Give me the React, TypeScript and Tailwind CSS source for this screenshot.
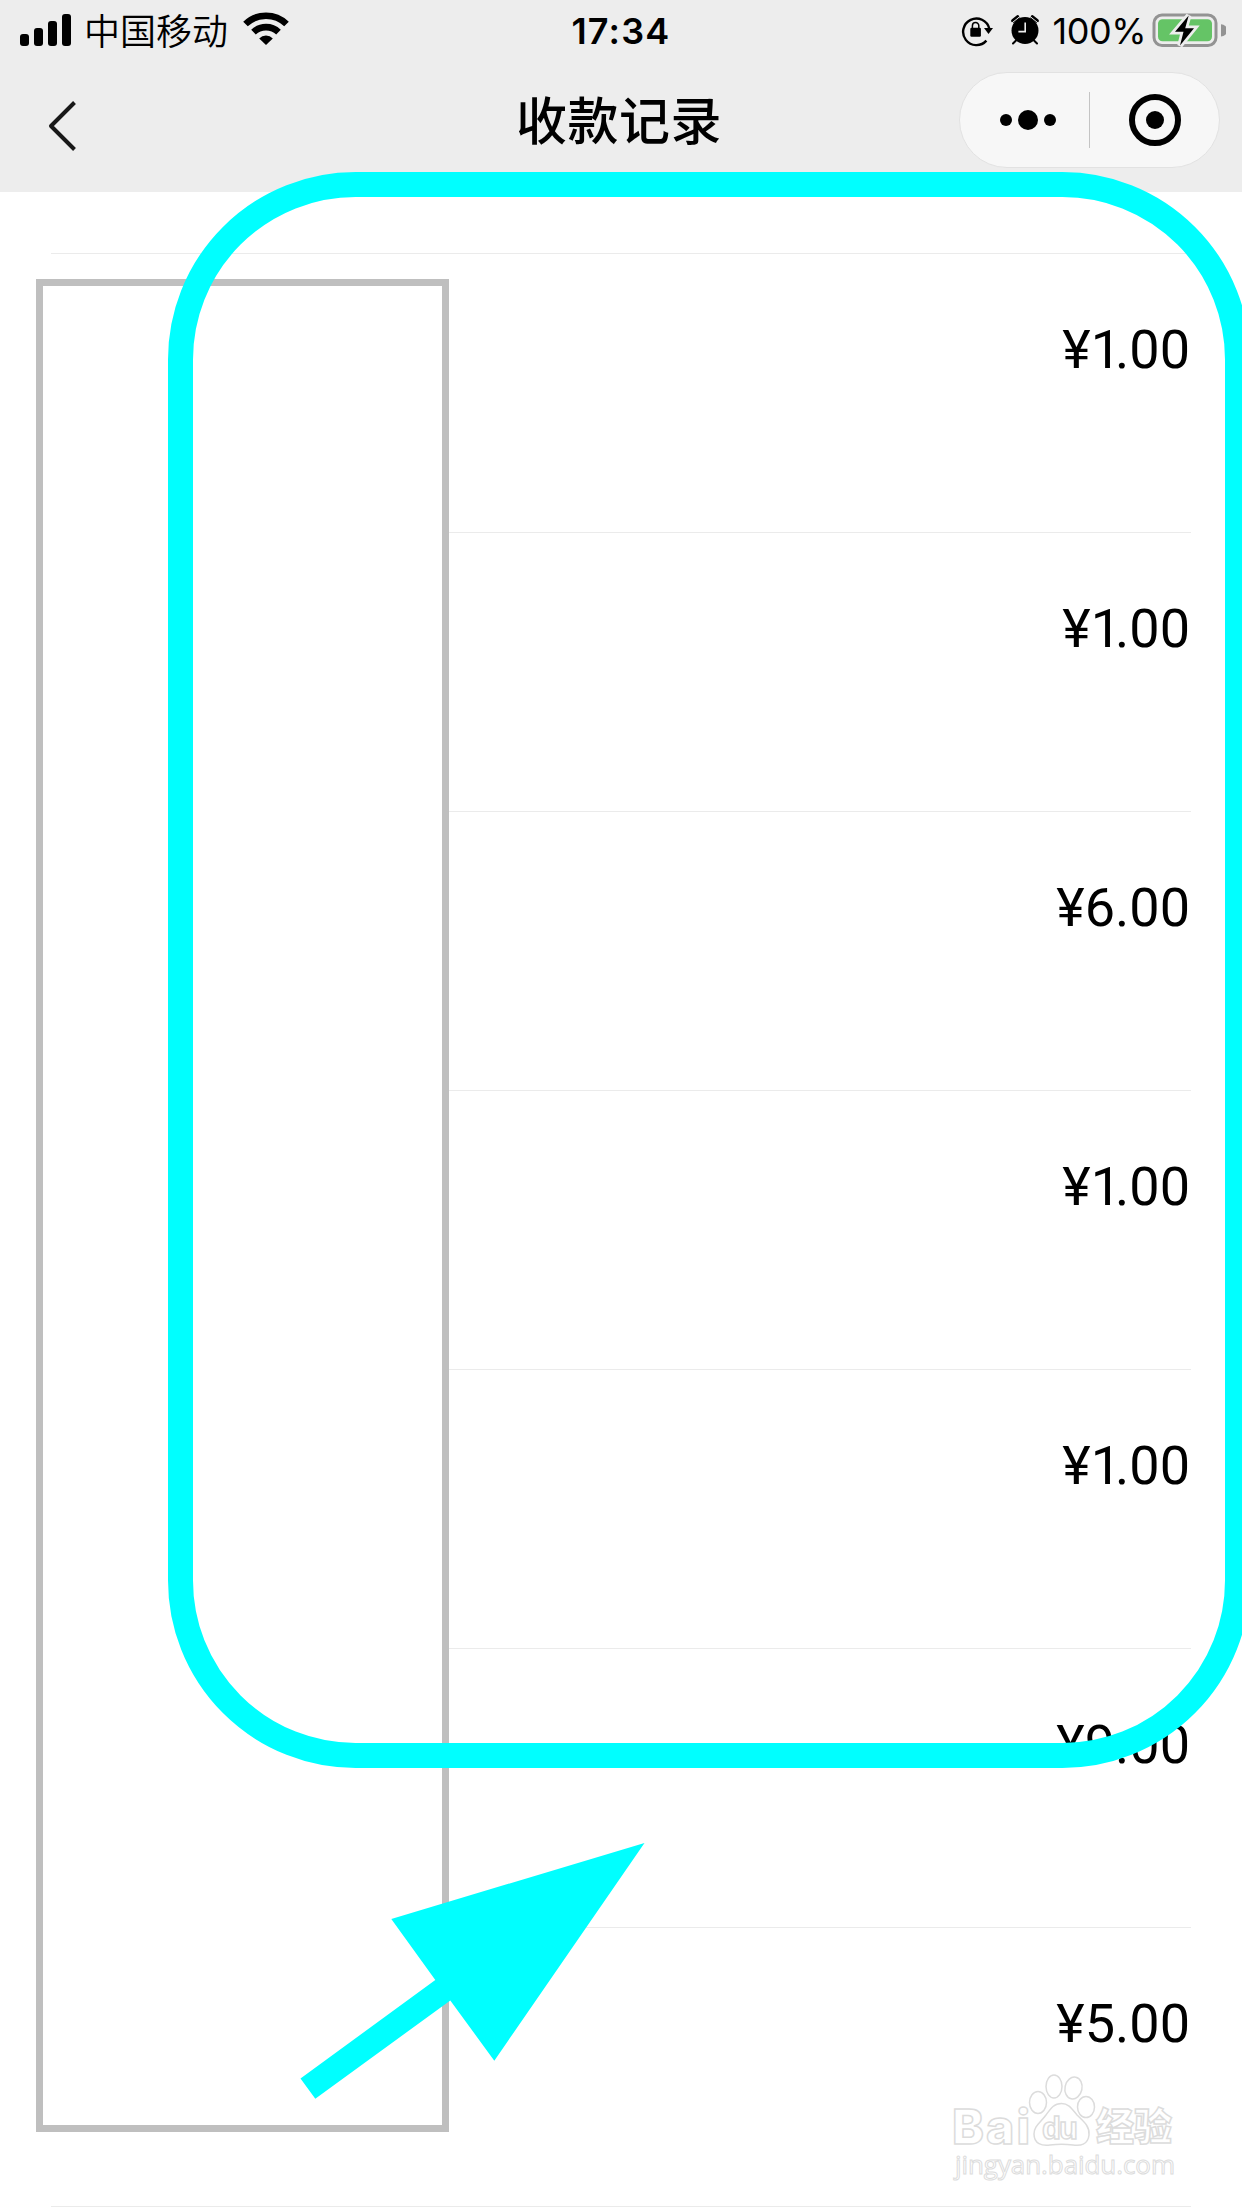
import React from "react";

///////////////////////////////////////////////////////////////////////////////
///////// Payment records — status bar, nav bar and list of amounts //////////
///////////////////////////////////////////////////////////////////////////////

type PaymentRecord = { id: number; whole: string; cents: string };

const records: PaymentRecord[] = [
  { id: 1, whole: "1", cents: ".00" },
  { id: 2, whole: "1", cents: ".00" },
  { id: 3, whole: "6", cents: ".00" },
  { id: 4, whole: "1", cents: ".00" },
  { id: 5, whole: "1", cents: ".00" },
  { id: 6, whole: "9", cents: ".00" },
  { id: 7, whole: "5", cents: ".00" },
];

function SignalIcon() {
  return (
    <svg width="52" height="33" viewBox="0 0 52 33" className="shrink-0">
      <rect x="0" y="20" width="9" height="12" rx="3" />
      <rect x="14" y="14" width="9" height="18" rx="3" />
      <rect x="28" y="7" width="9" height="25" rx="3" />
      <rect x="42" y="0" width="9" height="32" rx="3" />
    </svg>
  );
}

function WifiIcon() {
  return (
    <svg width="46" height="34" viewBox="0 0 46 34" className="shrink-0">
      <g fill="none" stroke="black">
        <path d="M2.5 12 A 29.5 29.5 0 0 1 43.5 12" strokeWidth="6.6" />
        <path d="M10.5 20.2 A 18 18 0 0 1 35.5 20.2" strokeWidth="6.6" />
      </g>
      <path d="M23 33 L16.2 26.4 A 9.6 9.6 0 0 1 29.8 26.4 Z" />
    </svg>
  );
}

function RotationLockIcon() {
  return (
    <svg width="34" height="32" viewBox="0 0 34 32" className="shrink-0">
      <path
        d="M25.4 25.6 A 13.3 13.3 0 1 1 28.3 13.5"
        fill="none"
        stroke="black"
        strokeWidth="2.4"
      />
      <path d="M23 13 L32 13 L27.5 19 Z" />
      <rect x="9.3" y="12.8" width="10.6" height="9" rx="1.2" />
      <path
        d="M11.4 13 V10.8 A 3.2 3.2 0 0 1 17.8 10.8 V13"
        fill="none"
        stroke="black"
        strokeWidth="1.5"
      />
    </svg>
  );
}

function AlarmIcon() {
  return (
    <svg width="28" height="30" viewBox="0 0 28 30" className="shrink-0">
      <circle cx="14" cy="15.5" r="13.5" />
      <path
        d="M2.2 5.8 L6.6 2.2 M25.8 5.8 L21.4 2.2"
        stroke="black"
        strokeWidth="4"
        strokeLinecap="round"
      />
      <path d="M0.8 8 L9 1.4 M27.2 8 L19 1.4" stroke="#ededed" strokeWidth="1" />
      <path
        d="M5 25.5 L2 28.5 M23 25.5 L26 28.5"
        stroke="black"
        strokeWidth="2"
        strokeLinecap="round"
      />
      <path d="M14.2 7.5 V16.6 H7.4" fill="none" stroke="#ededed" strokeWidth="1.6" />
    </svg>
  );
}

function BatteryIcon() {
  return (
    <svg width="74" height="36" viewBox="0 0 74 36" className="shrink-0">
      <rect
        x="2"
        y="2"
        width="62"
        height="30.5"
        rx="8"
        fill="none"
        stroke="#939393"
        strokeWidth="3"
      />
      <rect x="6" y="6.3" width="54" height="22" rx="4.5" fill="#65c466" />
      <path d="M69 11.2 A 6.2 6.2 0 0 1 69 23.6 Z" fill="#939393" />
      <path
        d="M36.7 2.5 L23 18.7 H31.5 L28 32.6 L42 15.2 H33.2 Z"
        stroke="#ededed"
        strokeWidth="5.5"
      />
      <path d="M36.7 2.5 L23 18.7 H31.5 L28 32.6 L42 15.2 H33.2 Z" />
    </svg>
  );
}

function StatusBar() {
  return (
    <div className="flex h-[60px] items-start">
      <div className="flex flex-1 items-start pl-5">
        <div className="mt-[14px]">
          <SignalIcon />
        </div>
        <span className="ml-3 mt-[2px] font-['Noto_Sans_CJK_SC',sans-serif] text-4xl leading-[54px] font-[350]">
          中国移动
        </span>
        <div className="ml-[15px] mt-[12px]">
          <WifiIcon />
        </div>
      </div>
      <span className="-ml-1 mt-[4px] font-['Inter',sans-serif] text-4xl leading-[54px] font-semibold tracking-[1.2px]">
        17:34
      </span>
      <div className="flex flex-1 items-start justify-end pr-4">
        <div className="mt-[15px]">
          <RotationLockIcon />
        </div>
        <div className="ml-[16px] mt-[15px]">
          <AlarmIcon />
        </div>
        <span className="ml-[14px] mt-[4px] font-['Inter',sans-serif] text-4xl leading-[54px] tracking-[-0.5px]">
          100%
        </span>
        <div className="ml-[6px] mt-[13px]">
          <BatteryIcon />
        </div>
      </div>
    </div>
  );
}

function NavBar() {
  return (
    <div className="flex h-[132px] items-start">
      <div className="flex-1">
        <svg width="30" height="52" viewBox="0 0 30 52" className="ml-12 mt-10">
          <path
            d="M26.5 2.5 L3 26 L26.5 49.5"
            fill="none"
            stroke="#181818"
            strokeWidth="4"
            strokeLinejoin="round"
          />
        </svg>
      </div>
      <h1 className="-ml-1 mt-5 font-['Noto_Sans_CJK_SC',sans-serif] text-[51px] leading-[76px] font-medium tracking-[0.5px]">
        收款记录
      </h1>
      <div className="flex flex-1 justify-end pt-3">
        <div className="mr-[22px] flex h-24 w-[261px] items-center rounded-full border border-[#e2e2e2] bg-[#f7f7f7]">
          <div className="flex w-[129px] items-center justify-center gap-1.5 pl-1.5">
            <span className="size-3 rounded-full bg-black" />
            <span className="size-5 rounded-full bg-black" />
            <span className="size-3 rounded-full bg-black" />
          </div>
          <span className="h-14 w-px bg-[#c4c4c4]" />
          <div className="flex flex-1 items-center justify-center">
            <span className="flex size-[52px] items-center justify-center rounded-full border-6 border-black">
              <span className="size-[18px] rounded-full bg-black" />
            </span>
          </div>
        </div>
      </div>
    </div>
  );
}

function RecordRow({ record }: { record: PaymentRecord }) {
  return (
    <li className="flex h-[279px] justify-end border-b border-[#ebebeb] pt-16 pr-px">
      <span className="font-['Roboto',sans-serif] text-[54px] leading-[64px]">
        ¥
        <span className={record.whole === "1" ? "tracking-[-6px]" : ""}>
          {record.whole}
        </span>
        {record.cents}
      </span>
    </li>
  );
}

function Watermark() {
  return (
    <svg
      width="240"
      height="120"
      viewBox="0 0 240 120"
      className="absolute left-[945px] top-[2070px]"
      fill="white"
      stroke="#dcdcdc"
      strokeWidth="1.5"
    >
      <text
        x="7"
        y="73.5"
        fontSize="48"
        fontWeight="800"
        textLength="78"
        fontFamily="Inter, sans-serif"
      >
        Bai
      </text>
      <ellipse cx="93" cy="32.5" rx="8.5" ry="11" />
      <ellipse cx="109" cy="16.5" rx="8" ry="11.5" />
      <ellipse cx="128.5" cy="18" rx="8.5" ry="11" transform="rotate(12 128.5 18)" />
      <ellipse cx="141" cy="37" rx="8.5" ry="10.5" />
      <path d="M116.5 33.5 C124 33.5 127 39 132 45 C138 51 145 56 144 65 C143 75 135 76 128 75 C120 74 113 74 105 75 C97 76 89 74 89 64 C89 56 95 53 101 45 C106 38 109 33.5 116.5 33.5 Z" />
      <text
        x="97"
        y="69"
        fontSize="31"
        fontWeight="700"
        textLength="36"
        fontFamily="Liberation Sans, sans-serif"
      >
        du
      </text>
      <text
        x="151"
        y="70"
        fontSize="38"
        fontWeight="900"
        fontFamily="Noto Sans CJK SC, sans-serif"
      >
        经验
      </text>
      <text
        x="10"
        y="104"
        fontSize="26"
        strokeWidth="1"
        textLength="220"
        fontFamily="Open Sans, sans-serif"
      >
        jingyan.baidu.com
      </text>
    </svg>
  );
}

export default function App() {
  return (
    <div className="relative h-[2208px] w-[1242px] overflow-hidden bg-white text-black">
      <header className="bg-[#ededed]">
        <StatusBar />
        <NavBar />
      </header>

      <main className="px-[51px]">
        <div className="h-[62px] border-b border-[#ebebeb]" />
        <ul>
          {records.map((record) => (
            <RecordRow key={record.id} record={record} />
          ))}
        </ul>
      </main>

      {/* Cover over the payer details */}
      <div className="absolute left-[36px] top-[279px] h-[1853px] w-[413px] border-7 border-[#bfbfbf] bg-white" />

      <Watermark />

      {/* Highlight frame and arrow */}
      <svg
        width="1242"
        height="2208"
        viewBox="0 0 1242 2208"
        className="absolute left-0 top-0"
      >
        <rect
          x="180.5"
          y="184.5"
          width="1057"
          height="1571"
          rx="175"
          fill="none"
          stroke="#00ffff"
          strokeWidth="25"
        />
        <path
          d="M300.5 2078.5 L435.3 1980 L391.3 1919 L644.5 1843 L494.3 2060.7 L450.3 2000.5 L315.3 2098.7 Z"
          fill="#00ffff"
        />
      </svg>
    </div>
  );
}
